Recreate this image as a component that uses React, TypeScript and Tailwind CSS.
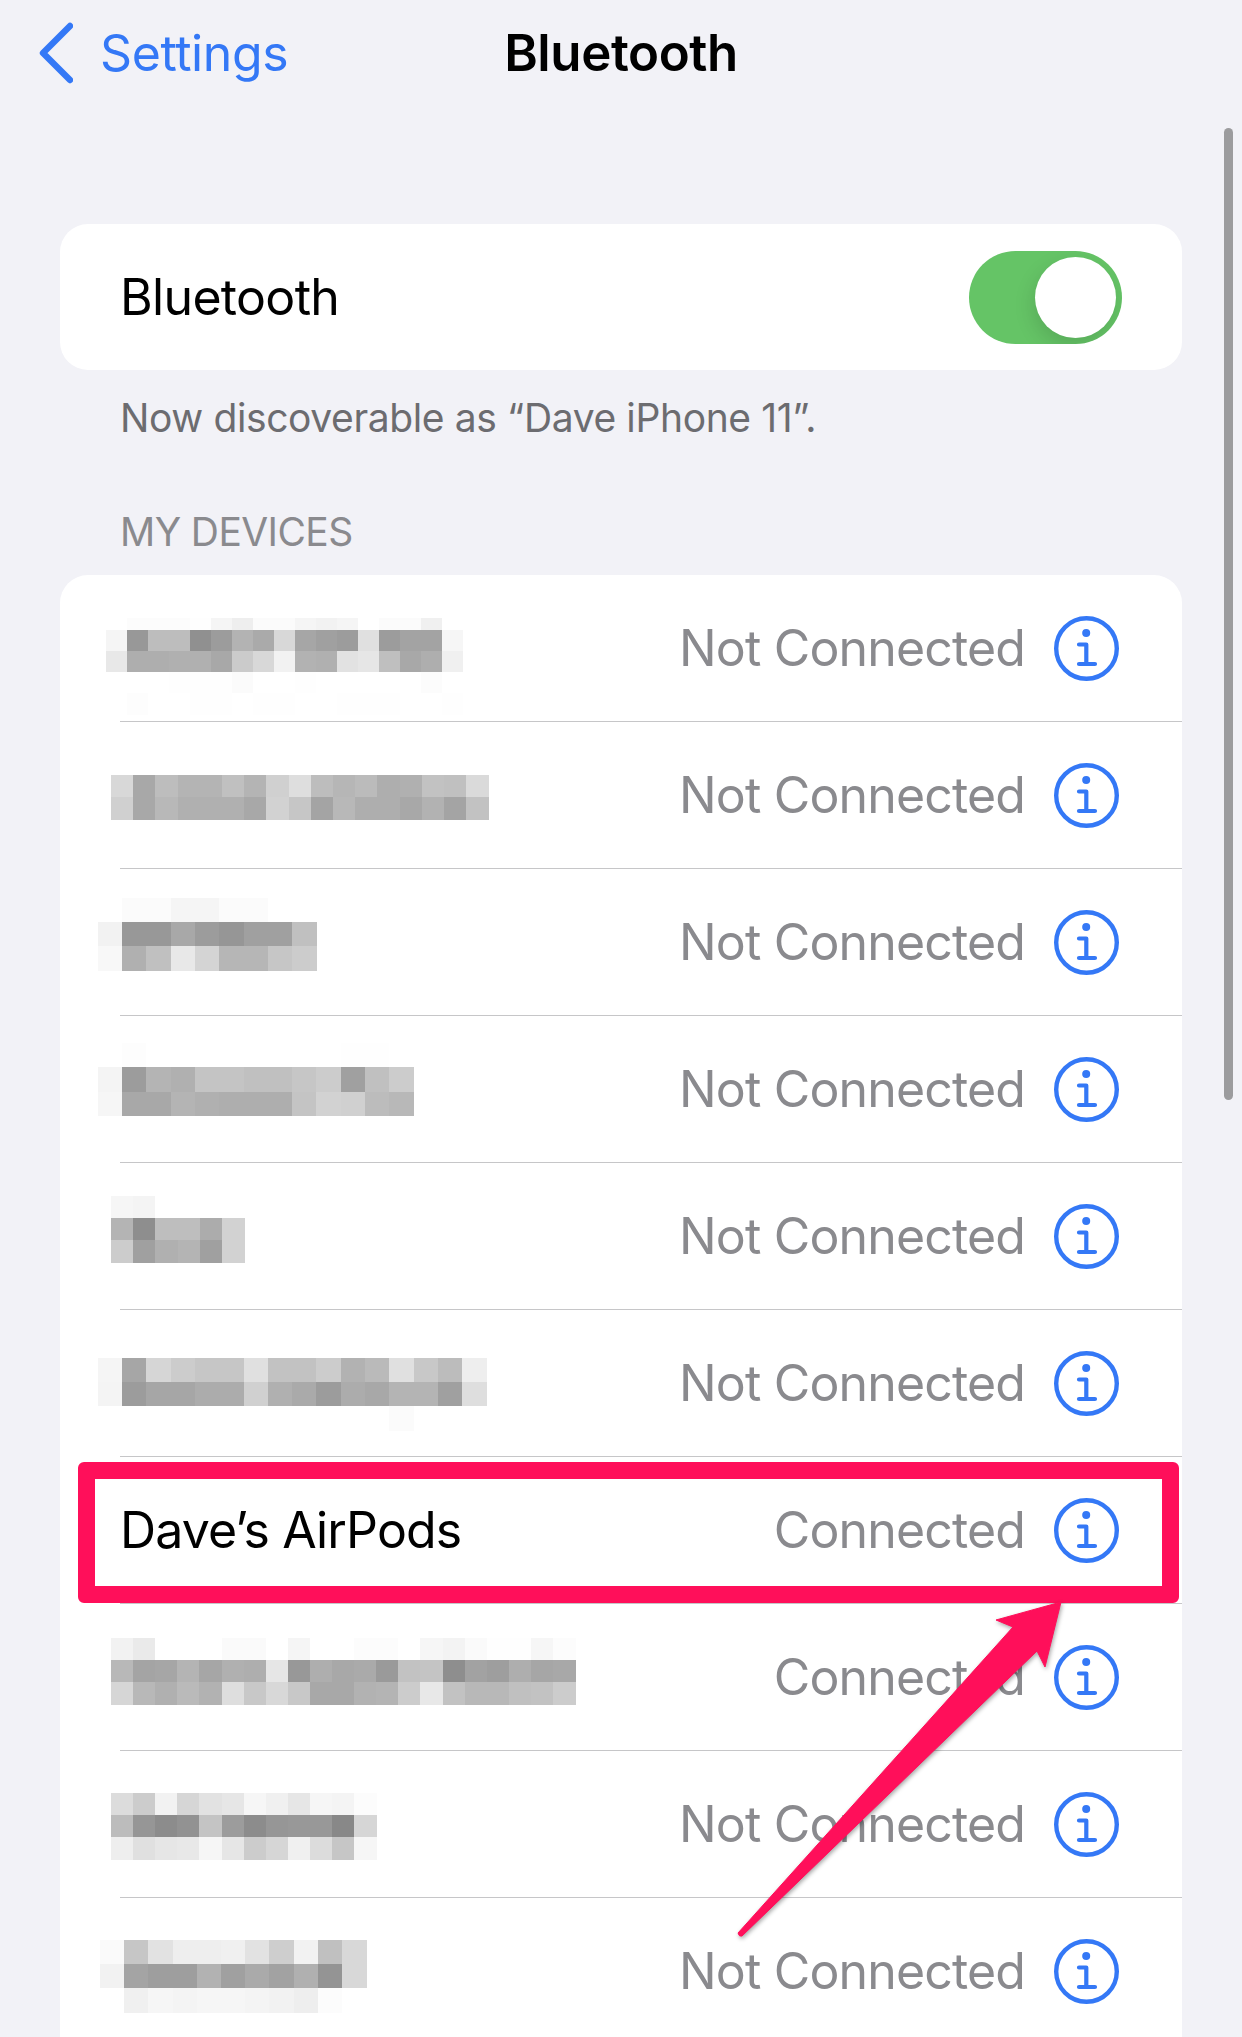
/* Redacted device names: rows of gray cells, in page coordinates */
type Mosaic = { x: number; y: number; w: number; h: number; topH?: number; cells: string[] };
type Device = { name?: string; status: string; mosaic?: Mosaic };

const ROW_H = 147;
const LIST_TOP = 575;

const DEVICES: Device[] = [
  {
    status: 'Not Connected',
    mosaic: {
      x: 105.7, y: 618, w: 21, h: 21, topH: 12,
      cells: [
        'ff fc fc fc fe f5 ee fb fb f5 f2 f5 ff fb fb f0 ff',
        'f5 98 bd bd 90 9c b3 aa d8 a6 a0 9c e0 9c a3 a3 f6',
        'e8 ae ae b0 b0 a8 cb d8 f2 b2 b0 e2 e6 bf a8 ae f0',
        'ff ff ff fe fe fe fb ff ff fe ff ff ff ff ff fc ff',
        'ff fd ff ff fe fe ff fe fe ff ff fe fe fe ff ff fe',
      ],
    },
  },
  {
    status: 'Not Connected',
    mosaic: {
      x: 111, y: 775, w: 22.2, h: 22,
      cells: [
        'd8 a8 bd b4 b4 c0 b4 d0 de bd b6 bb ae b0 c2 c0 da',
        'd0 a8 b8 b0 b0 b0 a8 d2 c6 a4 b8 ae ae a8 b2 a4 c2',
      ],
    },
  },
  {
    status: 'Not Connected',
    mosaic: {
      x: 97.7, y: 898, w: 24.3, h: 24,
      cells: [
        'ff fb fb f5 f5 fb fb ff ff',
        'f2 98 98 a8 9c 96 a0 a0 c0',
        'f8 b0 c0 e8 d4 b6 b6 c6 cc',
      ],
    },
  },
  {
    status: 'Not Connected',
    mosaic: {
      x: 97.7, y: 1043, w: 24.3, h: 24.3,
      cells: [
        'ff fd ff ff ff ff ff ff ff ff fe fe ff',
        'f4 9c b4 b0 c4 c4 c0 c0 c6 cc a0 c0 cc',
        'f6 a8 a8 b4 b0 ae ae ae c4 d2 d0 bc b8',
      ],
    },
  },
  {
    status: 'Not Connected',
    mosaic: {
      x: 111, y: 1196, w: 22.2, h: 22,
      cells: [
        'f6 f4 ff ff ff ff',
        'b4 8e be be ac d2',
        'cc a0 b0 b4 a0 d2',
      ],
    },
  },
  {
    status: 'Not Connected',
    mosaic: {
      x: 97.7, y: 1358, w: 24.3, h: 24,
      cells: [
        'f5 a6 d6 cc c6 c6 e0 c2 c2 cc b2 ba e0 c8 bc ee',
        'f4 9c a6 a6 ac ac d0 b0 aa 9c ac a8 b4 b4 a0 de',
        'ff ff ff ff ff ff ff ff ff ff ff ff fb ff ff ff',
      ],
    },
  },
  { name: 'Dave’s AirPods', status: 'Connected' },
  {
    status: 'Connected',
    mosaic: {
      x: 111, y: 1638, w: 22.1, h: 22,
      cells: [
        'f2 ea ff ff ff fa fa ff f5 ff ff fc fc ff f6 f3 fa fe fe f6 fc',
        'b8 a4 a6 b4 a6 b0 ae e6 98 ae a8 aa 9a c2 c4 8e a2 9e ae a6 a8',
        'd6 b8 b0 ba b2 de c8 d8 c8 a8 a8 b2 b4 cc e8 c2 b8 b8 c0 c2 cc',
      ],
    },
  },
  {
    status: 'Not Connected',
    mosaic: {
      x: 111, y: 1793, w: 22.1, h: 22.2,
      cells: [
        'dc cc f2 d6 e2 e6 f6 f0 e6 f6 f4 fc',
        'bc 96 8c 92 c4 9c 8c 96 98 98 88 d6',
        'ee e0 e6 e8 f6 e6 cc d6 f0 dc c6 f6',
      ],
    },
  },
  {
    status: 'Not Connected',
    mosaic: {
      x: 100, y: 1940, w: 24.2, h: 24,
      cells: [
        'fa c6 e2 ee ee f0 e2 ce f2 c0 d8',
        'f2 a4 9e 9e b2 a0 aa a2 b0 94 d8',
        'ff f0 f6 f4 f6 f6 f4 f2 ee fc ff',
      ],
    },
  },
];

function BackChevron() {
  return (
    <svg width="36" height="62" viewBox="0 0 36 62" fill="none" className="shrink-0">
      <path
        d="M33 4L6 31L33 58"
        stroke="#3478f6"
        strokeWidth="6.4"
        strokeLinecap="round"
        strokeLinejoin="round"
      />
    </svg>
  );
}

function InfoIcon() {
  return (
    <svg width="65" height="65" viewBox="0 0 65 65" fill="none" className="shrink-0">
      <circle cx="32.5" cy="32.5" r="30.3" stroke="#3478f6" strokeWidth="4.4" />
      <circle cx="32.2" cy="17" r="4" fill="#3478f6" />
      <path
        d="M25 28.5H32.3V48M25 48H41"
        stroke="#3478f6"
        strokeWidth="4.2"
        strokeLinecap="round"
        strokeLinejoin="round"
      />
    </svg>
  );
}

function NameMosaic({ mosaic, index }: { mosaic: Mosaic; index: number }) {
  const rowTop = LIST_TOP + index * ROW_H;
  const topH = mosaic.topH ?? mosaic.h;
  return (
    <svg width="540" height="146" className="-ml-[60px] shrink-0" shapeRendering="crispEdges">
      {mosaic.cells.map((line, r) =>
        line.split(' ').map((v, c) => (
          <rect
            key={`${r}-${c}`}
            x={mosaic.x - 60 + c * mosaic.w}
            y={mosaic.y - rowTop + (r === 0 ? 0 : topH + (r - 1) * mosaic.h)}
            width={mosaic.w + 0.5}
            height={(r === 0 ? topH : mosaic.h) + 0.5}
            fill={`#${v}${v}${v}`}
          />
        )),
      )}
    </svg>
  );
}

function DeviceRow({ device, index }: { device: Device; index: number }) {
  return (
    <div className="ml-[60px] flex h-[147px] items-center border-b border-[#c6c6c8] pr-[63px] text-[50px] tracking-[-0.85px]">
      {device.mosaic ? (
        <NameMosaic mosaic={device.mosaic} index={index} />
      ) : (
        <span className="pt-[2px] text-black">{device.name}</span>
      )}
      <span className="ml-auto pt-[2px] text-[#8a8a8e]">{device.status}</span>
      <span className="ml-[29px] flex">
        <InfoIcon />
      </span>
    </div>
  );
}

function Toggle() {
  return (
    <div className="flex h-[93px] w-[153px] items-center justify-end overflow-hidden rounded-full bg-[#65c466] pr-[6px]">
      <div className="h-[81px] w-[81px] rounded-full bg-white shadow-[-2px_8px_20px_rgba(0,0,0,0.13)]" />
    </div>
  );
}

export default function App() {
  return (
    <div className="relative h-[2037px] w-[1242px] overflow-hidden bg-[#f2f2f7] font-['Inter','Liberation_Sans',sans-serif] leading-[1.15]">
      {/* Nav bar */}
      <header className="grid h-[106px] grid-cols-[1fr_auto_1fr] items-center">
        <div className="flex items-center pl-[37px]">
          <BackChevron />
          <span className="ml-[27px] pt-[2px] text-[50px] tracking-[-0.4px] text-[#3478f6]">Settings</span>
        </div>
        <h1 className="text-[51px] font-semibold tracking-[-0.4px] text-black">Bluetooth</h1>
        <div />
      </header>

      <main className="mt-[118px] px-[60px]">
        <section className="flex h-[146px] items-center justify-between rounded-[28px] bg-white pl-[60px] pr-[60px]">
          <span className="pt-[2px] text-[50px] tracking-[-0.67px] text-black">Bluetooth</span>
          <Toggle />
        </section>

        <p className="mt-[24px] pl-[60px] text-[39px] leading-[47px] tracking-[-0.38px] text-[#6c6c70]">
          Now discoverable as “Dave iPhone 11”.
        </p>

        <h2 className="mb-[20px] mt-[67px] pl-[60px] text-[39px] font-normal leading-[47px] tracking-[-0.6px] text-[#8a8a8e]">
          MY DEVICES
        </h2>

        <section className="h-[1500px] overflow-hidden rounded-t-[28px] bg-white">
          {DEVICES.map((device, i) => (
            <DeviceRow key={i} device={device} index={i} />
          ))}
        </section>
      </main>

      {/* Scroll indicator */}
      <div className="absolute left-[1224px] top-[128px] h-[972px] w-[9px] rounded-full bg-[#9c9c9e]" />

      {/* Red annotation box */}
      <div className="absolute left-[78px] top-[1462px] h-[141px] w-[1101px] rounded-[6px] border-[17px] border-[#ff0f5a]" />

      {/* Annotation arrow */}
      <svg
        className="absolute left-0 top-0 drop-shadow-[1px_2px_2px_rgba(0,0,0,0.35)]"
        width="1242"
        height="2037"
        fill="none"
      >
        <path
          d="M1061 1602L996 1620L1013 1627L738 1933Q739 1937 742 1936L1037 1651L1045 1667Z"
          fill="#ff0f5a"
          stroke="#ff0f5a"
          strokeWidth="1"
          strokeLinejoin="round"
        />
      </svg>
    </div>
  );
}
